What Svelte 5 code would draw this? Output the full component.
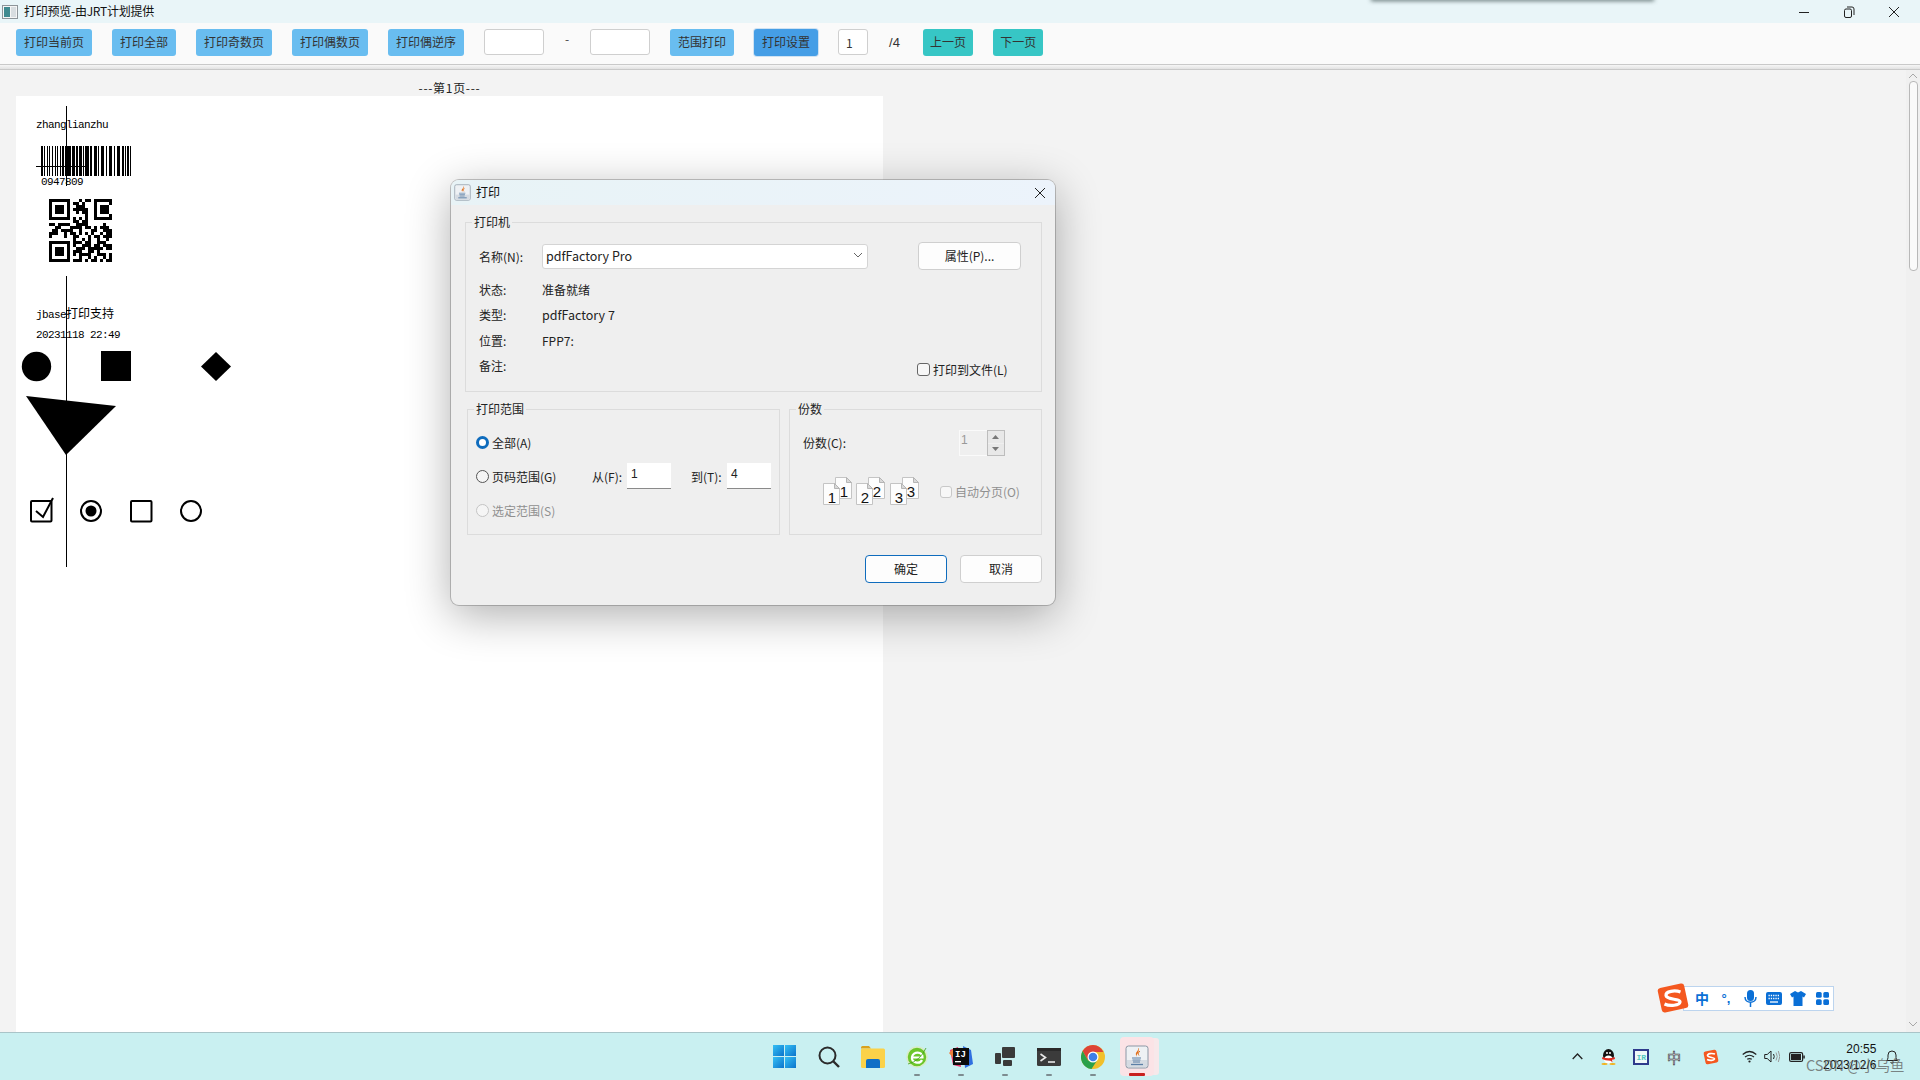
<script>
  const printButtons = ['打印当前页', '打印全部', '打印奇数页', '打印偶数页', '打印偶逆序'];

  const qrRows = [
    '111111100010110111111', '100000101101000100001', '101110100111000101110'.slice(0, 21),
    '101110101111100101110', '101110100101100101110', '100000100000100100001',
    '111111101010100111111', '000000001101100000000', '110111100111100000100',
    '001100011110110101110', '011011110010001100111', '111001011010101001011',
    '100001001100010110111', '000000001001010010010', '111111101110110011100',
    '100000101001110110111', '101110100111011111011', '101110101110011010000',
    '101110101011110011101', '100000100010010100101', '111111101110101101011'
  ];

  // bar, space, bar, space ... in pixels
  const barWidths = [2,1,1,2,1,1,1,2,1,2,1,1,1,2,1,1,2,1,1,1,4,1,3,1,2,1,3,1,1,1,4,1,2,2,3,1,1,2,3,2,1,2,3,2,1,2,3,2,2,1,1,1,2,1,1];
  let pos = 41;
  const bars = [];
  barWidths.forEach((w, i) => {
    if (i % 2 === 0) bars.push({ x: pos, w });
    pos += w;
  });

  const collate = [
    { n: 1, x: 0 },
    { n: 2, x: 33 },
    { n: 3, x: 67 }
  ];
</script>

{#snippet javaIcon()}
  <rect x="1" y="1" width="22" height="22" rx="2.5" fill="#eef1f4" stroke="#8b97a5" />
  <rect x="2" y="15" width="20" height="7" fill="#d5dbe2" />
  <path d="M13 3c1 3-3 4-2 7 .4 1 1 1.500 1 1.500-1.500-2 3-3.500 1.500-8.500z" fill="#e2711d" />
  <path d="M15 6c-2 1.500-2 3-1 4.500" fill="none" stroke="#e2711d" />
  <path d="M7 13h9M7.500 15h8M8 17h7" stroke="#5b7fa6" />
  <path d="M6 19.500h12" stroke="#5b7fa6" stroke-width="1.300" />
{/snippet}

{#snippet page(x, y, n)}
  <path d={`M${x + 0.5} ${y + 0.5}h11l5 5v16h-16z`} fill="#fdfdfd" stroke="#c4c4c4" />
  <path d={`M${x + 11.5} ${y + 0.5}v5h5z`} fill="#d9d9d9" stroke="#b5b5b5" />
  <text x={x + 9} y={y + 20} class="pageNum">{n}</text>
{/snippet}

<div class="app">
  <header class="titlebar">
    <svg class="appIcon" width="16" height="14" viewBox="0 0 16 14">
      <rect x="0.500" y="0.500" width="15" height="13" fill="#f5f5f5" stroke="#8d9499" />
      <rect x="2" y="2" width="6" height="10" fill="#3f8a8f" />
      <rect x="9" y="2" width="5" height="10" fill="#d8dde0" />
    </svg>
    <span class="titleText">打印预览-由JRT计划提供</span>
    <div class="winControls">
      <svg width="12" height="12" viewBox="0 0 12 12"><path d="M1 6.500h10" stroke="#222" /></svg>
      <svg width="12" height="12" viewBox="0 0 12 12"><rect x="1.500" y="3" width="7" height="8.500" rx="1.500" fill="none" stroke="#222" /><path d="M4 1h5q2 0 2 2v6" fill="none" stroke="#222" /></svg>
      <svg width="12" height="12" viewBox="0 0 12 12"><path d="M1 1l10 10M11 1L1 11" stroke="#222" /></svg>
    </div>
  </header>

  <div class="toolbar">
    {#each printButtons as label}
      <button class="tbtn">{label}</button>
    {/each}
    <input class="tinput rangeInput" />
    <span class="dash">-</span>
    <input class="tinput rangeInput" />
    <button class="tbtn">范围打印</button>
    <button class="tbtn setup">打印设置</button>
    <input class="tinput pageInput" value="1" />
    <span class="pageCount">/4</span>
    <button class="tbtn teal">上一页</button>
    <button class="tbtn teal">下一页</button>
  </div>
  <div class="splitter"></div>

  <main class="workspace">
    <div class="scroller">
      <div class="pageLabel">---第1页---</div>
      <div class="paper">
        <svg class="printed" width="240" height="480" viewBox="16 96 240 480">
          <text x="36" y="128" class="mono">zhanglianzhu</text>
          <g shape-rendering="crispEdges">
            {#each bars as b}
              <rect x={b.x} y="146" width={b.w} height="30" />
            {/each}
            {#each qrRows as row, r}
              {#each row.split('') as cell, c}
                {#if cell === '1'}
                  <rect x={49 + c * 3} y={199 + r * 3} width="3" height="3" />
                {/if}
              {/each}
            {/each}
            <rect x="66" y="106" width="1" height="80" />
            <rect x="36" y="166" width="51" height="1" />
            <rect x="66" y="276" width="1" height="291" />
          </g>
          <text x="41" y="185" class="mono">0947809</text>
          <text x="36" y="318" class="mono">jbase<tspan class="cjk">打印支持</tspan></text>
          <text x="36" y="338" class="mono">20231118 22:49</text>
          <circle cx="36.500" cy="366.500" r="14.700" />
          <rect x="101" y="351" width="30" height="30" />
          <path d="M216 352l15 14.500-15 14.500-15-14.500z" />
          <path d="M26 396l90 10-50 49z" />
          <rect x="31" y="501" width="20.500" height="20.500" rx="1" class="outline" />
          <path d="M36 511l7 6 10-19" class="outline" />
          <circle cx="91" cy="511" r="10" class="outline" />
          <circle cx="91" cy="511" r="5.500" />
          <rect x="131" y="501" width="20.500" height="20.500" rx="1" class="outline" />
          <circle cx="191" cy="511" r="10" class="outline" />
        </svg>
      </div>
    </div>

    <aside class="scrollbar">
      <svg width="10" height="6" viewBox="0 0 10 6"><path d="M1 5l4-4 4 4" fill="none" stroke="#a8a8a8" /></svg>
      <div class="thumb"></div>
      <svg class="downArrow" width="10" height="6" viewBox="0 0 10 6"><path d="M1 1l4 4 4-4" fill="none" stroke="#a8a8a8" /></svg>
    </aside>

    <section class="dialog">
      <div class="dialogTitle">
        <svg width="17" height="17" viewBox="0 0 24 24">{@render javaIcon()}</svg>
        <span class="dialogTitleText">打印</span>
        <svg class="dialogClose" width="12" height="12" viewBox="0 0 12 12"><path d="M1 1l10 10M11 1L1 11" stroke="#222" /></svg>
      </div>

      <div class="dialogBody">
        <div class="group printerGroup">
          <span class="legend">打印机</span>
          <div class="printerGrid">
            <span>名称(N):</span>
            <div class="combo">
              <span>pdfFactory Pro</span>
              <svg width="10" height="6" viewBox="0 0 10 6"><path d="M1 1l4 4 4-4" fill="none" stroke="#666" /></svg>
            </div>
            <button class="winBtn propsBtn">属性(P)...</button>

            <span class="infoKey">状态:</span><span class="infoVal">准备就绪</span>
            <span class="infoKey">类型:</span><span class="infoVal latin">pdfFactory 7</span>
            <span class="infoKey">位置:</span><span class="infoVal">FPP7:</span>
            <span class="infoKey">备注:</span>
            <label class="checkRow toFile"><span class="checkBox"></span>打印到文件(L)</label>
          </div>
        </div>

        <div class="lowerGroups">
          <div class="group rangeGroup">
            <span class="legend">打印范围</span>
            <div class="radioRow"><span class="radio on"></span>全部(A)</div>
            <div class="radioRow">
              <span class="radio"></span><span class="pageRangeLabel">页码范围(G)</span>
              <span class="fromLabel">从(F):</span><div class="numField">1</div>
              <span class="toLabel">到(T):</span><div class="numField">4</div>
            </div>
            <div class="radioRow disabled"><span class="radio off"></span>选定范围(S)</div>
          </div>

          <div class="group copiesGroup">
            <span class="legend">份数</span>
            <div class="copiesRow">
              <span class="copiesLabel">份数(C):</span>
              <div class="spinner">
                <span class="spinValue">1</span>
                <div class="spinBtns">
                  <span><svg width="7" height="4" viewBox="0 0 7 4"><path d="M3.500 0l3.500 4h-7z" fill="#777" /></svg></span>
                  <span><svg width="7" height="4" viewBox="0 0 7 4"><path d="M3.500 4l3.500-4h-7z" fill="#777" /></svg></span>
                </div>
              </div>
            </div>
            <div class="collateRow">
              <svg width="96" height="29" viewBox="0 0 96 29">
                {#each collate as set}
                  {@render page(set.x + 12, 0, set.n)}
                  {@render page(set.x, 6, set.n)}
                {/each}
              </svg>
              <label class="checkRow disabled"><span class="checkBox faint"></span>自动分页(O)</label>
            </div>
          </div>
        </div>

        <div class="dialogActions">
          <button class="winBtn primary">确定</button>
          <button class="winBtn">取消</button>
        </div>
      </div>
    </section>

    <div class="imeBar">
      <svg class="imeLogo" width="32" height="30" viewBox="0 0 32 30">
        <rect x="2.500" y="2.500" width="27" height="25" rx="3" fill="#f4581f" transform="rotate(-12 16 15)" />
        <path d="M23.500 9C18 7 8.500 8 9 12.500S23.500 15.500 23 19 13 23.500 7.500 21" fill="none" stroke="#fff" stroke-width="3.200" />
      </svg>
      <div class="imeItems">
        <span class="imeCell imeText">中</span>
        <span class="imeCell imeText punct">°,</span>
        <span class="imeCell"><svg width="13" height="17" viewBox="0 0 13 17"><rect x="3" y="0" width="7" height="11" rx="3.500" fill="#0a6fd6" /><path d="M1 7c0 7 11 7 11 0M6.500 13v4" fill="none" stroke="#0a6fd6" stroke-width="1.500" /></svg></span>
        <span class="imeCell"><svg width="16" height="13" viewBox="0 0 16 13"><rect width="16" height="13" rx="2" fill="#0a6fd6" /><path d="M2.500 3.500h11M2.500 6.500h11" stroke="#fff" stroke-width="1.300" stroke-dasharray="1.300 1" /><path d="M4 10h8" stroke="#fff" stroke-width="1.300" /></svg></span>
        <span class="imeCell"><svg width="16" height="15" viewBox="0 0 16 15"><path d="M5 0l3 1.500L11 0l5 3-2 3.500-1.500-1V15h-9V5.500L2 6.500 0 3z" fill="#0a6fd6" /></svg></span>
        <span class="imeCell"><svg width="13" height="13" viewBox="0 0 13 13" fill="#0a6fd6"><rect width="5.700" height="5.700" rx="1.500" /><rect x="7.300" width="5.700" height="5.700" rx="1.500" /><rect y="7.300" width="5.700" height="5.700" rx="1.500" /><rect x="7.300" y="7.300" width="5.700" height="5.700" rx="1.500" /></svg></span>
      </div>
    </div>
  </main>

  <footer class="taskbar">
    <div class="taskIcons">
      <div class="taskCell startCell">
        <svg width="23" height="23" viewBox="0 0 23 23">
          <defs><linearGradient id="winBlue" x1="0" y1="0" x2="1" y2="1"><stop offset="0" stop-color="#35c0f5" /><stop offset="1" stop-color="#0b74cc" /></linearGradient></defs>
          <rect width="11" height="11" fill="url(#winBlue)" /><rect x="12" width="11" height="11" fill="url(#winBlue)" />
          <rect y="12" width="11" height="11" fill="url(#winBlue)" /><rect x="12" y="12" width="11" height="11" fill="url(#winBlue)" />
        </svg>
      </div>
      <div class="taskCell">
        <svg width="22" height="22" viewBox="0 0 22 22"><circle cx="9.500" cy="9.500" r="8" fill="none" stroke="#2b2b2b" stroke-width="2" /><path d="M15 15l6 6" stroke="#2b2b2b" stroke-width="2.400" /></svg>
      </div>
      <div class="taskCell">
        <svg width="24" height="22" viewBox="0 0 24 22"><path d="M0 1.500Q0 0 1.500 0H8l2 2.500h-10z" fill="#d9a21f" /><rect y="2.500" width="24" height="19.500" rx="1.500" fill="#fbd249" /><path d="M5 15q0-2 2-2h10q2 0 2 2v7H5z" fill="#0f6fc6" /></svg>
      </div>
      <div class="taskCell dot">
        <svg width="22" height="24" viewBox="0 0 22 24"><circle cx="11" cy="12" r="10" fill="#6cc62a" stroke="#d8ecc8" stroke-width="1.500" /><path d="M5.500 12.500h11c.5-6.500-9.500-6.500-10.500-.5s8 7.500 10 3" fill="none" stroke="#fff" stroke-width="2.200" /><path d="M2 19Q14 16 20 3" fill="none" stroke="#3f9e1a" stroke-width=".8" /></svg>
      </div>
      <div class="taskCell dot">
        <svg width="24" height="24" viewBox="0 0 24 24">
          <path d="M1 5l8-3 3 20-8-2z" fill="#e8356d" /><path d="M14 1l8 4 2 14-8 4z" fill="#2f6fe0" /><path d="M0 8l4-4 5 4-3 7z" fill="#f07d3a" />
          <rect x="4" y="3" width="16" height="17" fill="#0c0c0c" />
          <text x="6" y="12" class="ijText">IJ</text>
          <rect x="6" y="16" width="6" height="1.300" fill="#fff" />
        </svg>
      </div>
      <div class="taskCell dot">
        <svg width="20" height="20" viewBox="0 0 20 20" fill="#3a3a3a"><rect x="7" y="0" width="13" height="11" rx="1" /><rect x="0" y="6" width="6" height="11" rx="1" /><rect x="8" y="13" width="9" height="6" rx="1" /></svg>
      </div>
      <div class="taskCell dot">
        <svg width="24" height="18" viewBox="0 0 24 18"><rect width="24" height="18" rx="1.500" fill="#3b3b3b" /><rect width="24" height="3" fill="#2a2a2a" /><path d="M3.500 6l5 3.500-5 3.500" fill="none" stroke="#e8e8e8" stroke-width="1.600" /><path d="M11 14h7" stroke="#e8e8e8" stroke-width="1.600" /></svg>
      </div>
      <div class="taskCell dot">
        <svg width="24" height="24" viewBox="0 0 24 24">
          <circle cx="12" cy="12" r="12" fill="#f1c02b" />
          <path d="M12 0A12 12 0 0 0 1.600 6L7 15.500 12 7h10.400A12 12 0 0 0 12 0z" fill="#dd4437" />
          <path d="M1.600 6A12 12 0 0 0 10.500 24L16 15.500 7 15.500z" fill="#2ba14b" />
          <circle cx="12" cy="12" r="5.500" fill="#fff" /><circle cx="12" cy="12" r="4.300" fill="#3f7fe6" />
        </svg>
      </div>
      <div class="taskCell active">
        <svg width="24" height="24" viewBox="0 0 24 24">{@render javaIcon()}</svg>
      </div>
    </div>

    <div class="tray">
      <svg class="tChevron" width="11" height="7" viewBox="0 0 11 7"><path d="M.700 6l4.800-5 4.800 5" fill="none" stroke="#222" stroke-width="1.300" /></svg>
      <svg class="tQq" width="15" height="16" viewBox="0 0 15 16"><ellipse cx="7.500" cy="6.500" rx="5.500" ry="6.500" fill="#111" /><ellipse cx="7.500" cy="10.500" rx="4.500" ry="4" fill="#fff" /><path d="M1.500 8q6 2.500 12 0l.5 2q-2 1-3 .8l.5 2.500-2-1.500Q4 11.500 1 10z" fill="#e02b20" /><ellipse cx="3.500" cy="15" rx="3.200" ry="1" fill="#f3b21a" /><ellipse cx="11.500" cy="15" rx="3.200" ry="1" fill="#f3b21a" /><circle cx="6" cy="4" r="1" fill="#fff" /><circle cx="9" cy="4" r="1" fill="#fff" /></svg>
      <svg class="tIr" width="16" height="16" viewBox="0 0 16 16"><rect x="1" y="1" width="14" height="14" fill="#eef8f8" stroke="#2e3a8c" stroke-width="2" /><text x="3.500" y="11" class="irText">IR</text></svg>
      <span class="tZh">中</span>
      <svg class="tSogou" width="16" height="16" viewBox="0 0 16 16"><rect x="1.500" y="1.500" width="13" height="13" rx="2" fill="#f4581f" transform="rotate(-12 8 8)" /><path d="M12 5C9 4 4 4.500 4.500 6.500S12 8.500 11.500 10 7 12 4 10.500" fill="none" stroke="#fff" stroke-width="1.600" /></svg>
      <svg class="tWifi" width="15" height="13" viewBox="0 0 15 13"><path d="M.700 4.500Q7.500-1.500 14.300 4.500M3 7q4.500-3.500 9 0M5.200 9.300q2.300-1.500 4.600 0" fill="none" stroke="#222" stroke-width="1.200" /><circle cx="7.500" cy="11.500" r="1.100" fill="#222" /></svg>
      <svg class="tSpeaker" width="16" height="13" viewBox="0 0 16 13"><path d="M.700 4.500h2.500L7 1v11L3.200 8.500H.700z" fill="none" stroke="#222" /><path d="M9.500 4q1.500 2.500 0 5" fill="none" stroke="#222" /><path d="M12 2.500q2.500 4 0 8M14.300 1q3 5.500 0 11" fill="none" stroke="#999" /></svg>
      <svg class="tBattery" width="16" height="10" viewBox="0 0 16 10"><rect x=".600" y=".600" width="13" height="8.800" rx="1.500" fill="none" stroke="#222" stroke-width="1.200" /><rect x="2" y="2" width="10" height="6" fill="#222" /><rect x="14.300" y="3.500" width="1.500" height="3" fill="#222" /></svg>
      <div class="clock"><span>20:55</span><span>2023/12/6</span></div>
      <svg class="tBell" width="12" height="15" viewBox="0 0 12 15"><path d="M.500 11.500q1.500-1 1.500-3V6a4 4 0 0 1 8 0v2.500q0 2 1.500 3zM4.500 13.500q1.500 1.500 3 0" fill="none" stroke="#222" /></svg>
    </div>
    <span class="watermark">CSDN @小乌鱼</span>
  </footer>

  <div class="topShadow"></div>
</div>

<style>
  :global(body) {
    overflow: hidden;
    background: #f3f3f3;
  }

  .app {
    position: relative;
    width: 1920px;
    height: 1080px;
    display: flex;
    flex-direction: column;
    font-family: "Noto Sans CJK SC", "Noto Sans", sans-serif;
    font-size: 12px;
    color: #222;
    overflow: hidden;
  }

  .titlebar {
    height: 23px;
    flex: none;
    background: #e9f5f8;
    display: flex;
    align-items: center;
    padding-left: 2px;
  }
  .titleText { margin: 0 0 2px 6px; color: #111; letter-spacing: -0.25px; }
  .winControls {
    margin-left: auto;
    display: flex;
    gap: 33px;
    padding-right: 20px;
  }

  .toolbar {
    height: 41px;
    flex: none;
    background: #fafafa;
    display: flex;
    align-items: center;
    gap: 20px;
    padding: 0 0 3px 16px;
    box-sizing: border-box;
  }
  .tbtn {
    height: 27px;
    padding: 0 8px 2px;
    border: none;
    border-radius: 3px;
    background: #69bdf0;
    color: #333;
    font: inherit;
  }
  .tbtn.setup { background: #459ee6; box-shadow: 0 0 0 1px #cfe2f2; }
  .tbtn.teal { background: #37c6c5; padding: 0 7px 2px; }
  .tinput {
    height: 26px;
    box-sizing: border-box;
    border: 1px solid #cfcfcf;
    border-radius: 3px;
    background: #fff;
    font: inherit;
    color: #333;
    padding: 0 7px;
    outline: none;
  }
  .rangeInput { width: 60px; }
  .pageInput { width: 30px; }
  .dash { width: 6px; margin-bottom: 7px; color: #444; text-align: center; }
  .pageCount { width: 13px; margin: 0 1px; color: #333; font-size: 13px; font-family: "Liberation Sans", sans-serif; }

  .splitter {
    height: 6px;
    flex: none;
    box-sizing: border-box;
    border-top: 1px solid #c9c9c9;
    border-bottom: 1px solid #c9c9c9;
    background: linear-gradient(#f6f6f6, #e2e2e2);
  }

  .workspace {
    flex: 1;
    min-height: 0;
    position: relative;
    display: flex;
    background: #f3f3f3;
  }
  .scroller {
    flex: 1;
    display: flex;
    flex-direction: column;
    padding-left: 16px;
  }
  .pageLabel {
    height: 26px;
    width: 867px;
    line-height: 35px;
    text-align: center;
    letter-spacing: 0.7px;
    color: #222;
    flex: none;
  }
  .paper {
    flex: 1;
    width: 867px;
    background: #fff;
  }
  .printed { display: block; }
  .mono { font-family: "Liberation Mono", monospace; font-size: 11px; letter-spacing: -0.6px; fill: #000; }
  .cjk { font-family: "Noto Sans CJK SC", sans-serif; font-size: 12px; letter-spacing: 0; }
  .outline { fill: none; stroke: #000; stroke-width: 2; }

  .scrollbar {
    width: 14px;
    flex: none;
    display: flex;
    flex-direction: column;
    align-items: center;
    padding: 3px 0 5px;
    box-sizing: border-box;
    background: #f0f0f0;
  }
  .thumb {
    width: 9px;
    height: 190px;
    margin-top: 2px;
    box-sizing: border-box;
    border: 1px solid #b8b8b8;
    border-radius: 4px;
    background: #fafafa;
  }
  .downArrow { margin-top: auto; }

  .dialog {
    position: absolute;
    left: 451px;
    top: 110px;
    width: 604px;
    height: 425px;
    border-radius: 8px;
    background: #efefef;
    box-shadow: 0 0 0 1px rgba(90, 90, 90, 0.35), 0 10px 45px rgba(0, 0, 0, 0.32);
    overflow: hidden;
  }
  .dialogTitle {
    height: 25px;
    display: flex;
    align-items: center;
    gap: 5px;
    padding-left: 3px;
    background: linear-gradient(90deg, #e8f3f6, #ecf3fb);
    color: #111;
  }
  .dialogTitleText { margin-bottom: 2px; }
  .dialogClose { margin-left: auto; margin-right: 9px; }
  .dialogBody { padding: 17px 13px 0 14px; }

  .group {
    position: relative;
    box-sizing: border-box;
    border: 1px solid #dcdcdc;
  }
  .legend {
    position: absolute;
    top: -10px;
    left: 6px;
    padding: 0 2px;
    background: #efefef;
    color: #222;
    line-height: 18px;
  }
  .printerGroup { height: 170px; }
  .printerGrid {
    display: grid;
    grid-template-columns: 63px 326px 50px 103px;
    grid-template-rows: 28px repeat(4, 25.5px);
    padding: 19px 0 0 13px;
    align-items: center;
  }
  .combo {
    grid-column: 2;
    height: 25px;
    box-sizing: border-box;
    border: 1px solid #d4d4d4;
    border-radius: 3px;
    background: #fff;
    display: flex;
    align-items: center;
    justify-content: space-between;
    padding: 0 4px 2px 3px;
    font-size: 12.500px;
    color: #222;
  }
  .infoKey { grid-column: 1; position: relative; top: 6.500px; }
  .infoVal { grid-column: 2 / span 3; position: relative; top: 6.500px; }
  .infoVal.latin { font-size: 12.500px; }
  .toFile { grid-column: 4; position: relative; top: 10px; left: -1px; white-space: nowrap; }

  .winBtn {
    width: 82px;
    height: 28px;
    border: 1px solid #cfcfcf;
    border-radius: 4px;
    background: #fdfdfd;
    font: inherit;
    color: #222;
    padding: 0 0 2px;
  }
  .propsBtn { grid-column: 4; width: 103px; }
  .winBtn.primary { border-color: #0f6cbd; }

  .checkRow { display: flex; align-items: center; gap: 3px; }
  .checkBox {
    width: 13px;
    height: 13px;
    box-sizing: border-box;
    border: 1px solid #666;
    border-radius: 3px;
    background: #f7f7f7;
  }
  .checkBox.faint { border-color: #c8c8c8; }
  .disabled { color: #8f8f8f; }

  .lowerGroups {
    display: flex;
    gap: 9px;
    margin: 17px 0 0 2px;
  }
  .rangeGroup {
    width: 314px;
    height: 126px;
    padding: 15px 0 0 8px;
  }
  .copiesGroup {
    width: 254px;
    height: 126px;
    padding: 20px 0 0 13px;
  }
  .radioRow {
    height: 34px;
    display: flex;
    align-items: center;
  }
  .radio {
    width: 13px;
    height: 13px;
    box-sizing: border-box;
    border: 1px solid #555;
    border-radius: 50%;
    background: #f5f5f5;
    margin-right: 3px;
    flex: none;
  }
  .radio.on { border: 3.500px solid #0f6cbd; background: #fff; }
  .radio.off { border-color: #c4c4c4; }
  .pageRangeLabel { width: 100px; }
  .fromLabel { width: 35px; }
  .toLabel { width: 36px; margin-left: 20px; }
  .numField {
    width: 44px;
    height: 26px;
    box-sizing: border-box;
    background: #fff;
    border-bottom: 1px solid #8a8a8a;
    padding: 0 4px;
    line-height: 23px;
    font-family: "Liberation Sans", sans-serif;
  }

  .copiesRow { display: flex; align-items: center; }
  .copiesLabel { width: 156px; padding-bottom: 2px; }
  .spinner {
    width: 46px;
    height: 26px;
    display: flex;
    box-sizing: border-box;
    border: 1px solid #fafafa;
    color: #999;
    font-family: "Liberation Sans", sans-serif;
  }
  .spinValue { flex: 1; padding: 2px 0 0 1px; }
  .spinBtns {
    width: 16px;
    display: flex;
    flex-direction: column;
    gap: 1px;
    background: #efefef;
    box-shadow: 0 0 0 1px #bdbdbd;
  }
  .spinBtns span {
    flex: 1;
    display: flex;
    align-items: center;
    justify-content: center;
    background: #e8e8e8;
  }
  .collateRow {
    display: flex;
    align-items: center;
    gap: 21px;
    margin: 21px 0 0 20px;
  }
  .collateRow svg { flex: none; }
  .collateRow .checkBox { width: 12px; height: 12px; }
  .collateRow .checkRow { white-space: nowrap; }
  .pageNum { font-family: "Liberation Sans", sans-serif; font-size: 15px; text-anchor: middle; fill: #111; }

  .dialogActions {
    display: flex;
    justify-content: flex-end;
    gap: 13px;
    margin-top: 20px;
  }

  .imeBar {
    position: absolute;
    left: 1657px;
    top: 913px;
    display: flex;
    align-items: center;
  }
  .imeLogo { position: relative; z-index: 1; }
  .imeItems {
    margin-left: -6px;
    width: 151px;
    height: 25px;
    box-sizing: border-box;
    border: 1px solid #bcd4ee;
    background: #fff;
    display: flex;
    align-items: center;
    padding-left: 6px;
  }
  .imeCell {
    width: 24px;
    flex: none;
    display: flex;
    align-items: center;
    justify-content: center;
  }
  .imeText { color: #0a6fd6; font-size: 14px; font-weight: 700; }
  .imeText.punct { font-size: 13px; font-family: "Liberation Sans", sans-serif; }

  .taskbar {
    height: 48px;
    flex: none;
    position: relative;
    box-sizing: border-box;
    border-top: 1px solid #a9c4c8;
    background: #c9f0f1;
    display: flex;
    justify-content: center;
    padding-left: 2px;
  }
  .taskIcons { display: flex; }
  .taskCell {
    width: 44px;
    height: 47px;
    position: relative;
    display: flex;
    align-items: center;
    justify-content: center;
  }
  .startCell svg { margin-left: -2px; }
  .taskCell.dot::after {
    content: '';
    position: absolute;
    left: 19px;
    bottom: 4px;
    width: 6px;
    height: 2px;
    border-radius: 1px;
    background: #7d8c90;
  }
  .taskCell.active::before {
    content: '';
    position: absolute;
    left: 5px;
    top: 4px;
    width: 34px;
    height: 39px;
    border-radius: 4px;
    background: #fbe3e6;
    box-shadow: 6px 0 0 -1px #f7e8ea;
  }
  .taskCell.active svg { position: relative; }
  .taskCell.active::after {
    content: '';
    position: absolute;
    left: 14px;
    bottom: 4px;
    width: 16px;
    height: 3px;
    border-radius: 1px;
    background: #c8201f;
  }
  .ijText { font-family: "Liberation Mono", monospace; font-size: 9px; font-weight: 700; fill: #fff; }

  .tray {
    position: absolute;
    left: 1572px;
    top: 0;
    height: 47px;
    display: flex;
    align-items: center;
  }
  .tQq { margin-left: 18px; }
  .tIr { margin-left: 17px; }
  .tZh {
    margin-left: 18px;
    width: 14px;
    font-size: 14px;
    line-height: 18px;
    color: #fff;
    -webkit-text-stroke: 0.6px #333;
  }
  .tSogou { margin-left: 22px; }
  .tWifi { margin-left: 23px; }
  .tSpeaker { margin-left: 7px; }
  .tBattery { margin-left: 9px; }
  .clock {
    margin-left: 18px;
    display: flex;
    flex-direction: column;
    align-items: flex-end;
    line-height: 16px;
    font-family: "Liberation Sans", sans-serif;
    font-size: 12px;
    color: #111;
  }
  .tBell { margin-left: 10px; }
  .irText { font-family: "Liberation Mono", monospace; font-size: 8px; font-weight: 700; fill: #52c7c0; }

  .watermark {
    position: absolute;
    left: 1806px;
    top: 22px;
    font-size: 14.500px;
    line-height: 20px;
    color: rgba(95, 95, 95, 0.75);
    white-space: nowrap;
  }

  .topShadow {
    position: absolute;
    left: 1371px;
    top: -4px;
    width: 283px;
    height: 4px;
    box-shadow: 0 1px 4px rgba(40, 60, 60, 0.7);
  }
</style>
